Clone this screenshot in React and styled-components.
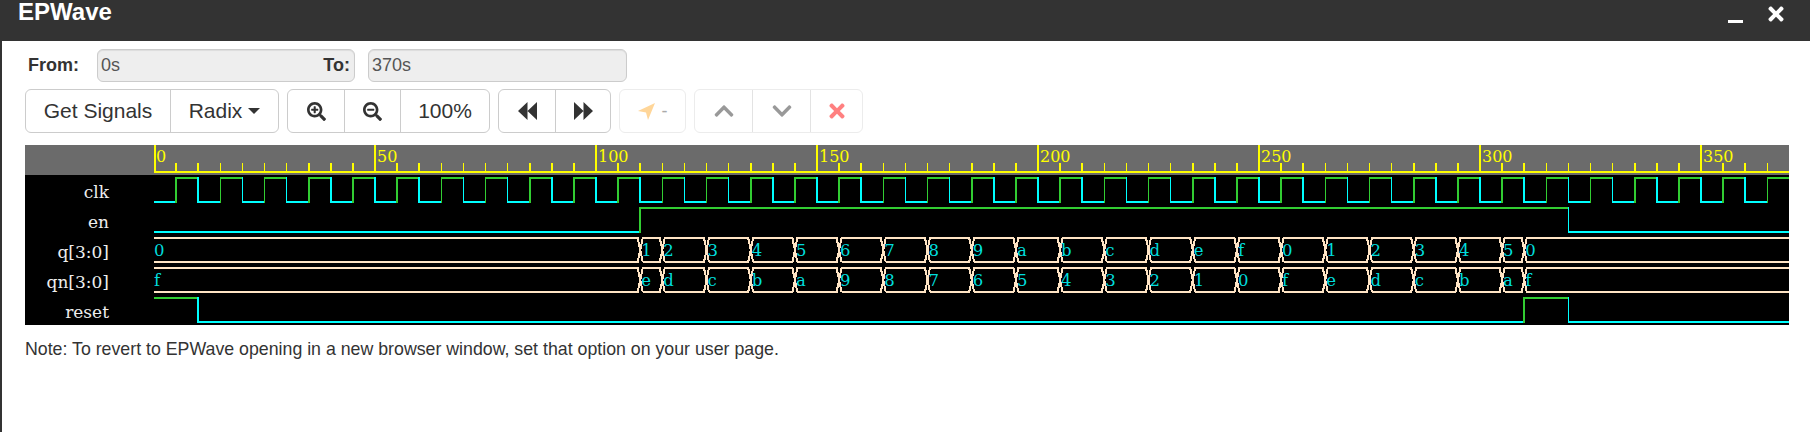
import React from "react";
import styled, { createGlobalStyle } from "styled-components";
import { FaSearchPlus, FaSearchMinus, FaChevronUp, FaChevronDown, FaTimes } from "react-icons/fa";

const PX = 4.42;
const tx = (t) => t * PX;

const GREEN = "#32cd32";
const CYAN = "#00ffff";
const BUS = "#ffe4c4";
const BUS_TEXT = "#00dcdc";
const YELLOW = "#ffff00";
const END = 370;
const WIDTH = 1635;

const GlobalStyle = createGlobalStyle`
  html, body {
    margin: 0;
    padding: 0;
    background: #fff;
    overflow: hidden;
  }
  body {
    font-family: "Liberation Sans", Arial, sans-serif;
    color: #333;
  }
`;

const Page = styled.div`
  width: 1810px;
  height: 432px;
  display: flex;
  flex-direction: column;
  border-left: 2px solid #333;
  box-sizing: border-box;
`;

const TitleBar = styled.div`
  height: 41px;
  flex: none;
  background: #333;
  color: #fff;
  display: flex;
  justify-content: space-between;
  padding: 0 23px 0 16px;
`;

const Title = styled.h1`
  margin: 0;
  font-size: 24px;
  line-height: 23px;
  font-weight: bold;
`;

const WindowButtons = styled.div`
  display: flex;
  align-items: flex-start;
`;

const Minimize = styled.span`
  width: 15px;
  height: 3px;
  background: #fff;
  margin: 20px 22px 0 0;
`;

const Close = styled(FaTimes)`
  color: #fff;
  font-size: 22px;
  margin-top: 3px;
`;

const Content = styled.div`
  padding: 8px 19px 0 23px;
  display: flex;
  flex-direction: column;
`;

const RangeRow = styled.div`
  display: flex;
  align-items: center;
  height: 33px;
`;

const RangeLabel = styled.label`
  font-size: 18px;
  font-weight: bold;
  width: 72px;
  padding-left: 3px;
  box-sizing: border-box;
`;

const RangeField = styled.div`
  position: relative;
  width: ${(p) => p.$width}px;
  height: 33px;
  box-sizing: border-box;
  background: #eee;
  border: 1px solid #ccc;
  border-radius: 6px;
  color: #555;
  font-size: 18px;
  line-height: 31px;
  padding-left: 3px;
  box-shadow: inset 0 1px 1px rgba(0, 0, 0, 0.075);
  margin-right: ${(p) => p.$gap || 0}px;
`;

const ToLabel = styled.span`
  position: absolute;
  right: 4px;
  top: 0;
  font-weight: bold;
  color: #333;
`;

const Toolbar = styled.div`
  display: flex;
  gap: 8px;
  margin-top: 7px;
`;

const ButtonGroup = styled.div`
  display: flex;
  height: 44px;
  box-sizing: border-box;
  border: 1px solid ${(p) => (p.$dim ? "#ececec" : "#ccc")};
  border-radius: 6px;
  background: #fff;
`;

const GroupButton = styled.button`
  width: ${(p) => p.$width}px;
  padding: 0;
  border: 0;
  border-left: 1px solid ${(p) => (p.$dim ? "#e3e3e3" : "#ccc")};
  background: transparent;
  color: #333;
  font-family: inherit;
  font-size: 21px;
  display: flex;
  align-items: center;
  justify-content: center;
  gap: ${(p) => p.$gap || 0}px;
  &:first-child {
    border-left: 0;
  }
`;

const Caret = styled.span`
  width: 0;
  height: 0;
  margin-left: 6px;
  border-left: 6px solid transparent;
  border-right: 6px solid transparent;
  border-top: 6px solid #333;
`;

const Dash = styled.span`
  color: #aaa;
  font-size: 18px;
`;

const Chart = styled.div`
  margin-top: 12px;
  width: 1764px;
  display: grid;
  grid-template-columns: 129px 1635px;
  grid-template-rows: 30px 150px;
  background: #000;
`;

const Corner = styled.div`
  background: #6b6b6b;
`;

const Drawing = styled.svg`
  display: block;
`;

const Names = styled.div`
  display: flex;
  flex-direction: column;
`;

const Name = styled.div`
  height: 30px;
  line-height: 34px;
  text-align: right;
  padding-right: 45px;
  color: #eee;
  font-family: "DejaVu Serif", serif;
  font-size: 17px;
`;

const Note = styled.p`
  margin: 14px 0 0;
  font-size: 17.75px;
  line-height: 20px;
  color: #333;
`;

const Ruler = () => {
  const ticks = [];
  for (let t = 0; t <= END; t += 5) {
    const major = t % 50 === 0;
    ticks.push(
      <line key={t} x1={tx(t)} x2={tx(t)} y1={major ? 0 : 18} y2={26} stroke={YELLOW} strokeWidth={t === 0 ? 3 : 1.6} />
    );
    if (major) {
      ticks.push(
        <text key={"l" + t} x={tx(t) + 2} y={17} fill={YELLOW} fontFamily="DejaVu Serif, serif" fontSize="16">
          {t}
        </text>
      );
    }
  }
  return (
    <Drawing width={WIDTH} height={30} shapeRendering="crispEdges">
      <rect width={WIDTH} height={30} fill="#6b6b6b" />
      <rect y={26} width={WIDTH} height={2} fill={YELLOW} />
      {ticks}
    </Drawing>
  );
};

// one bit signal, changes is a list of [time, level]
const Bit = ({ top, changes }) => {
  const hi = top + 3;
  const lo = top + 27;
  const parts = [];
  changes.forEach(([t, level], i) => {
    const next = i + 1 < changes.length ? changes[i + 1][0] : END;
    const y = level ? hi : lo;
    const color = level ? GREEN : CYAN;
    parts.push(<line key={"h" + t} x1={tx(t)} x2={tx(next)} y1={y} y2={y} stroke={color} strokeWidth={2} />);
    if (i > 0) {
      parts.push(<line key={"v" + t} x1={tx(t)} x2={tx(t)} y1={hi - 1} y2={lo + 1} stroke={color} strokeWidth={1.6} />);
    }
  });
  return <g>{parts}</g>;
};

// multi bit signal, segments is a list of [time, label]
const Bus = ({ top, segments }) => {
  const hi = top + 3;
  const lo = top + 27;
  const mid = top + 15;
  const parts = [];
  segments.forEach(([t, label], i) => {
    const first = i === 0;
    const last = i === segments.length - 1;
    const x1 = tx(t);
    const x2 = last ? WIDTH : tx(segments[i + 1][0]);
    const leftEdge = first ? `${x1},${lo}` : `${x1 + 2.5},${lo} ${x1},${mid} ${x1 + 2.5},${hi}`;
    const startTop = first ? `${x1},${hi}` : "";
    const rightEdge = last ? `${x2},${hi} ${x2},${lo}` : `${x2 - 2.5},${hi} ${x2},${mid} ${x2 - 2.5},${lo}`;
    const points = first
      ? `${startTop} ${rightEdge} ${leftEdge}`
      : last
      ? `${x2},${lo} ${leftEdge} ${x2},${hi}`
      : `${leftEdge} ${rightEdge} ${x1 + 2.5},${lo}`;
    parts.push(<polyline key={"b" + t} fill="none" stroke={BUS} strokeWidth={2} points={points} />);
    parts.push(
      <text key={"t" + t} x={first ? x1 : x1 + 1} y={top + 21} fill={BUS_TEXT} fontFamily="DejaVu Serif, serif" fontSize="16.5">
        {label}
      </text>
    );
  });
  return <g>{parts}</g>;
};

const clkChanges = [];
for (let t = 0; t < END; t += 5) clkChanges.push([t, t % 10 === 5 ? 1 : 0]);

const qValues = "123456789abcdef012345".split("");
const qnValues = "edcba9876543210fedcba".split("");
const busTimes = (values, first, last) => {
  const list = [[0, first]];
  values.forEach((v, i) => list.push([i === 0 ? 110 : 105 + i * 10, v]));
  list.push([310, last]);
  return list;
};

const Waves = () => (
  <Drawing width={WIDTH} height={150} shapeRendering="crispEdges">
    <Bit top={0} changes={clkChanges} />
    <Bit top={30} changes={[[0, 0], [110, 1], [320, 0]]} />
    <Bus top={60} segments={busTimes(qValues, "0", "0")} />
    <Bus top={90} segments={busTimes(qnValues, "f", "f")} />
    <Bit top={120} changes={[[0, 1], [10, 0], [310, 1], [320, 0]]} />
  </Drawing>
);

const BackIcon = () => (
  <svg width="19" height="18" viewBox="0 0 19 18" fill="#333">
    <path d="M0 9 9.5 0v18zM9.5 9 19 0v18z" />
  </svg>
);

const ForwardIcon = () => (
  <svg width="19" height="18" viewBox="0 0 19 18" fill="#333">
    <path d="M19 9 9.5 0v18zM9.5 9 0 0v18z" />
  </svg>
);

const ArrowIcon = () => (
  <svg width="17" height="17" viewBox="0 0 17 17" fill="#ffd699">
    <path d="M17 0 0 8l8 1.5L10 17z" />
  </svg>
);

const SIGNALS = ["clk", "en", "q[3:0]", "qn[3:0]", "reset"];

export default function App() {
  return (
    <Page>
      <GlobalStyle />
      <TitleBar>
        <Title>EPWave</Title>
        <WindowButtons>
          <Minimize />
          <Close />
        </WindowButtons>
      </TitleBar>
      <Content>
        <RangeRow>
          <RangeLabel>From:</RangeLabel>
          <RangeField $width={258} $gap={13}>
            0s
            <ToLabel>To:</ToLabel>
          </RangeField>
          <RangeField $width={259}>370s</RangeField>
        </RangeRow>
        <Toolbar>
          <ButtonGroup>
            <GroupButton $width={144}>Get Signals</GroupButton>
            <GroupButton $width={108}>
              Radix
              <Caret />
            </GroupButton>
          </ButtonGroup>
          <ButtonGroup>
            <GroupButton $width={56}>
              <FaSearchPlus size={19} />
            </GroupButton>
            <GroupButton $width={56}>
              <FaSearchMinus size={19} />
            </GroupButton>
            <GroupButton $width={89}>100%</GroupButton>
          </ButtonGroup>
          <ButtonGroup>
            <GroupButton $width={56}>
              <BackIcon />
            </GroupButton>
            <GroupButton $width={55}>
              <ForwardIcon />
            </GroupButton>
          </ButtonGroup>
          <ButtonGroup $dim>
            <GroupButton $width={65} $gap={7} $dim>
              <ArrowIcon />
              <Dash>-</Dash>
            </GroupButton>
          </ButtonGroup>
          <ButtonGroup $dim>
            <GroupButton $width={57} $dim>
              <FaChevronUp size={22} color="#999" />
            </GroupButton>
            <GroupButton $width={58} $dim>
              <FaChevronDown size={22} color="#999" />
            </GroupButton>
            <GroupButton $width={52} $dim>
              <FaTimes size={22} color="#ff8080" />
            </GroupButton>
          </ButtonGroup>
        </Toolbar>
        <Chart>
          <Corner />
          <Ruler />
          <Names>
            {SIGNALS.map((s) => (
              <Name key={s}>{s}</Name>
            ))}
          </Names>
          <Waves />
        </Chart>
        <Note>Note: To revert to EPWave opening in a new browser window, set that option on your user page.</Note>
      </Content>
    </Page>
  );
}
